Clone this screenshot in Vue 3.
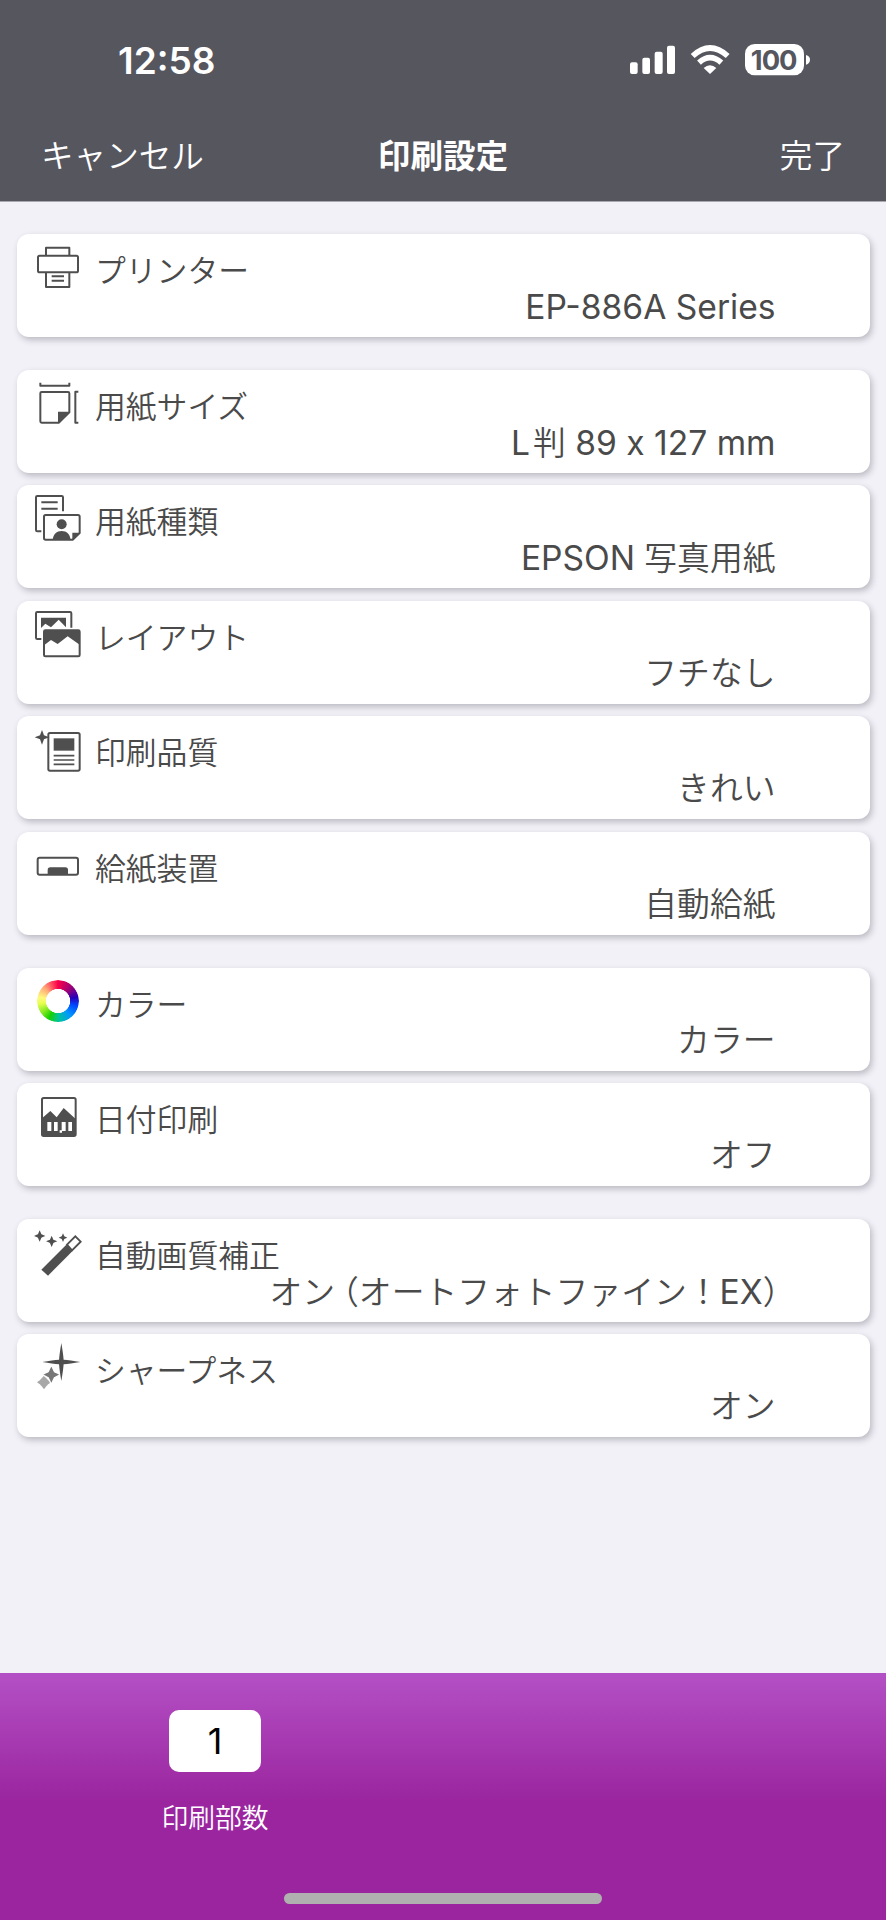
<script setup>
const ink = '#4f4f4f'
const line = `fill="none" stroke="${ink}" stroke-width="6" stroke-linejoin="round"`

// Four-pointed sparkle centred on (x, y); k sets how thick the arms are
const star = (x, y, r, k = 0.24, extra = `fill="${ink}"`) => {
  const c = r * k
  const m = r * 0.45
  return `<path ${extra} d="M${x} ${y - r}Q${x + c * 0.8} ${y - m} ${x + c} ${y - c}Q${x + m} ${y - c * 0.8} ${x + r} ${y}Q${x + m} ${y + c * 0.8} ${x + c} ${y + c}Q${x + c * 0.8} ${y + m} ${x} ${y + r}Q${x - c * 0.8} ${y + m} ${x - c} ${y + c}Q${x - m} ${y + c * 0.8} ${x - r} ${y}Q${x - m} ${y - c * 0.8} ${x - c} ${y - c}Q${x - c * 0.8} ${y - m} ${x} ${y - r}Z"/>`
}

const icons = {
  printer: {
    box: '102 69 144 144',
    art: `<g ${line}><path d="M138 106V83H208V106"/><rect x="114" y="107" width="120" height="50" rx="5"/><path d="M138 158V201H208V158M155 169H192M155 182H192"/></g>`,
  },
  size: {
    box: '102 477 144 144',
    art: `<g ${line}><path d="M121 488V497H208V488M235 515H226V608H235"/><path d="M125 516H204Q208 516 208 520V577L177 608H125Q121 608 121 604V520Q121 516 125 516Z"/></g><path fill="${ink}" d="M174 575H209L174 610Z"/>`,
  },
  type: {
    box: '102 59 144 144',
    art: `<g ${line}><path d="M124 171H112Q108 171 108 167V69Q108 65 112 65H185Q189 65 189 69V111M124 84H173M124 103H173"/><path d="M137 122H234Q239 122 239 127V176L218 196H137Q132 196 132 191V127Q132 122 137 122Z"/></g><circle cx="185" cy="150" r="15" fill="${ink}"/><path fill="${ink}" d="M158 197C160 179 170 170 185 170S210 179 212 197ZM217 175H241L217 198Z"/>`,
  },
  layout: {
    box: '102 405 144 144',
    art: `<g ${line}><path d="M124 492H112Q108 492 108 488V415Q108 411 112 411H210Q214 411 214 415V458"/><rect x="132" y="466" width="107" height="78" rx="4"/></g><path fill="${ink}" d="M123 428H198V457L176 434L153 457L136 446L123 459ZM132 466H239V509L203 484L173 507L153 495L132 511Z"/>`,
  },
  quality: {
    box: '102 62 144 144',
    art: `<g ${line}><rect x="145" y="86" width="94" height="113" rx="5"/><path stroke-width="5" d="M161 154H223M161 167H223M161 180H223"/></g><path fill="${ink}" d="M161 102H223V139H161Z"/>${star(126, 99, 22, 0.27)}`,
  },
  tray: {
    box: '102 407 144 144',
    art: `<rect ${line} x="113" y="457" width="121" height="51" rx="6"/><path fill="${ink}" d="M143 508V494Q143 486 151 486H196Q204 486 204 494V508Z"/>`,
  },
  date: {
    box: '102 426 144 144',
    art: `<rect ${line} x="126" y="444" width="101" height="114" rx="5"/><path fill="${ink}" d="M126 505L151 483L170 502L191 474L227 507V558H126Z"/><path fill="#fff" d="M142 516H154V543H142ZM162 516H173V543H162ZM185 516H197V543H185ZM205 516H216V543H205ZM179 541H186V548H179Z"/>`,
  },
  wand: {
    box: '102 69 144 144',
    art: `<path fill="${ink}" d="M124 194L199 119L217 139L144 212Z"/><path fill="none" stroke="${ink}" stroke-width="5.6" d="M201 119L226 94L242 110L216 136Z"/>${star(119, 93, 17, 0.3)}${star(155, 109, 17, 0.3)}${star(189, 98, 13, 0.3)}`,
  },
  sharp: {
    box: '102 416 144 144',
    art: `${star(132, 534, 21, 0.46, 'fill="#a8a8a8"')}${star(154, 511, 29, 0.32, 'fill="#777" stroke="#fff" stroke-width="4"')}${star(184, 473, 57, 0.12)}`,
  },
}

const groups = [
  [{ icon: 'printer', label: 'プリンター', value: ['EP-886A Series'] }],
  [
    { icon: 'size', label: '用紙サイズ', value: ['L', '判', ' 89 x 127 mm'] },
    { icon: 'type', label: '用紙種類', value: ['EPSON', ' 写真用紙'] },
    { icon: 'layout', label: 'レイアウト', value: ['フチなし'] },
    { icon: 'quality', label: '印刷品質', value: ['きれい'] },
    { icon: 'tray', label: '給紙装置', value: ['自動給紙'] },
  ],
  [
    { icon: 'color', label: 'カラー', value: ['カラー'] },
    { icon: 'date', label: '日付印刷', value: ['オフ'] },
  ],
  [
    { icon: 'wand', label: '自動画質補正', value: ['オン', '（', 'オートフォトファイン！', 'EX', '）'] },
    { icon: 'sharp', label: 'シャープネス', value: ['オン'] },
  ],
]

const partClass = (t) => ({
  latin: /^[\x20-\x7e]+$/.test(t),
  open: t === '（',
  close: t === '）',
  kanji: t === '判',
})
</script>

<template>
  <div class="screen">
    <header class="top">
      <div class="status">
        <span class="clock">12:58</span>
        <svg class="signals" viewBox="555 128 546 99">
          <g fill="#fff">
            <rect x="558" y="186" width="23" height="35" rx="6" />
            <rect x="595" y="172" width="23" height="49" rx="6" />
            <rect x="632" y="154" width="24" height="67" rx="6" />
            <rect x="669" y="136" width="24" height="85" rx="6" />
            <path d="M798 221L779 203Q798 187 817 203Z" />
            <rect x="903" y="131" width="177" height="94" rx="29" />
            <path d="M1086 164Q1098 167 1098 178T1086 193Z" />
          </g>
          <g fill="none" stroke="#fff" stroke-width="17">
            <path d="M746 167Q798 119 851 167" />
            <path d="M765 187Q798 157 832 187" />
          </g>
          <text x="989" y="208" class="pct">100</text>
        </svg>
      </div>
      <nav class="nav">
        <span class="action">キャンセル</span>
        <h1>印刷設定</h1>
        <span class="action end">完了</span>
      </nav>
    </header>

    <main class="list">
      <section v-for="(group, g) in groups" :key="g" class="group">
        <article v-for="row in group" :key="row.label" class="card">
          <div class="head">
            <div v-if="row.icon === 'color'" class="icon"><div class="wheel"></div></div>
            <svg v-else class="icon" :viewBox="icons[row.icon].box" v-html="icons[row.icon].art"></svg>
            <span class="label">{{ row.label }}</span>
          </div>
          <div class="value"><span v-for="(t, i) in row.value" :key="i" :class="partClass(t)">{{ t }}</span></div>
        </article>
      </section>
    </main>

    <footer class="bottom">
      <div class="copies">
        <div class="count">1</div>
        <div class="caption">印刷部数</div>
      </div>
      <div class="home"></div>
    </footer>
  </div>
</template>

<style>
body {
  margin: 0;
}
</style>

<style scoped>
.screen {
  width: 886px;
  height: 1920px;
  display: flex;
  flex-direction: column;
  overflow: hidden;
  background: #f2f1f8;
  color: #4a4a4a;
  font-family: Inter, "Noto Sans CJK JP", sans-serif;
}
.top {
  box-sizing: border-box;
  height: 202px;
  flex: none;
  background: #56565f;
  border-bottom: 1px solid #aaa9af;
  color: #fff;
}
.status {
  height: 120px;
  padding: 0 75px 0 118px;
  display: flex;
  justify-content: space-between;
}
.clock {
  margin-top: 41px;
  font-size: 37px;
  line-height: 40px;
  font-weight: 600;
}
.signals {
  width: 182px;
  height: 33px;
  margin-top: 43px;
}
.pct {
  fill: #56565f;
  font-size: 82px;
  font-weight: 700;
  text-anchor: middle;
  letter-spacing: -3px;
}
.nav {
  display: grid;
  grid-template-columns: 1fr auto 1fr;
  height: 72px;
  padding: 0 41px;
  align-items: center;
  font-size: 32.6px;
  line-height: 40px;
}
.nav h1 {
  margin: 0;
  font-size: 32.6px;
  font-weight: 700;
}
.action {
  font-weight: 350;
}
.end {
  text-align: right;
}
.list {
  flex: 1;
  padding: 32px 16.5px 0;
  display: flex;
  flex-direction: column;
  gap: 33px;
}
.group {
  display: flex;
  flex-direction: column;
  gap: 12.4px;
}
.card {
  box-sizing: border-box;
  height: 103px;
  padding: 9px 94px 0 17.5px;
  border-radius: 12px;
  background: #fff;
  box-shadow: 2px 3px 6px rgba(60, 60, 70, 0.3);
}
.head {
  display: flex;
  height: 48px;
}
.icon {
  width: 48px;
  height: 48px;
  flex: none;
}
.wheel {
  width: 42px;
  height: 42px;
  margin: 3px;
  border-radius: 50%;
  background: conic-gradient(#fa0048, #9a0078 45deg, #2800b8 78deg, #0048ff 105deg, #0098ff 140deg, #00c49c 178deg, #18d000 208deg, #80e820 232deg, #e8ff50 262deg, #fff880 282deg, #ffa878 315deg, #ff5060 338deg, #fa0048);
  -webkit-mask: radial-gradient(circle, transparent 11.8px, #000 12.4px);
  mask: radial-gradient(circle, transparent 11.8px, #000 12.4px);
}
.label {
  margin: 8px 0 0 13px;
  font-size: 30.8px;
  line-height: 40px;
  font-weight: 350;
  white-space: nowrap;
}
.value {
  margin-top: -1px;
  font-size: 32.8px;
  line-height: 33px;
  font-weight: 350;
  text-align: right;
  white-space: pre;
}
.latin {
  font-size: 33.6px;
  font-weight: 400;
}
.open {
  margin-left: -9px;
}
.close {
  margin-right: -20px;
}
.kanji {
  margin-left: 3px;
}
.bottom {
  box-sizing: border-box;
  height: 247px;
  flex: none;
  padding: 37px 0 16px;
  display: flex;
  flex-direction: column;
  justify-content: space-between;
  background: linear-gradient(#b450c5, #9a259f 52%);
  color: #fff;
}
.copies {
  width: 430px;
  display: flex;
  flex-direction: column;
  align-items: center;
}
.count {
  width: 92px;
  height: 62px;
  border-radius: 10px;
  background: #fff;
  color: #000;
  font-size: 36px;
  line-height: 62px;
  text-align: center;
}
.caption {
  margin-top: 26px;
  font-size: 26.8px;
  line-height: 40px;
  font-weight: 350;
}
.home {
  width: 318px;
  height: 11px;
  margin: 0 auto;
  border-radius: 6px;
  background: #b0b0b0;
}
</style>
